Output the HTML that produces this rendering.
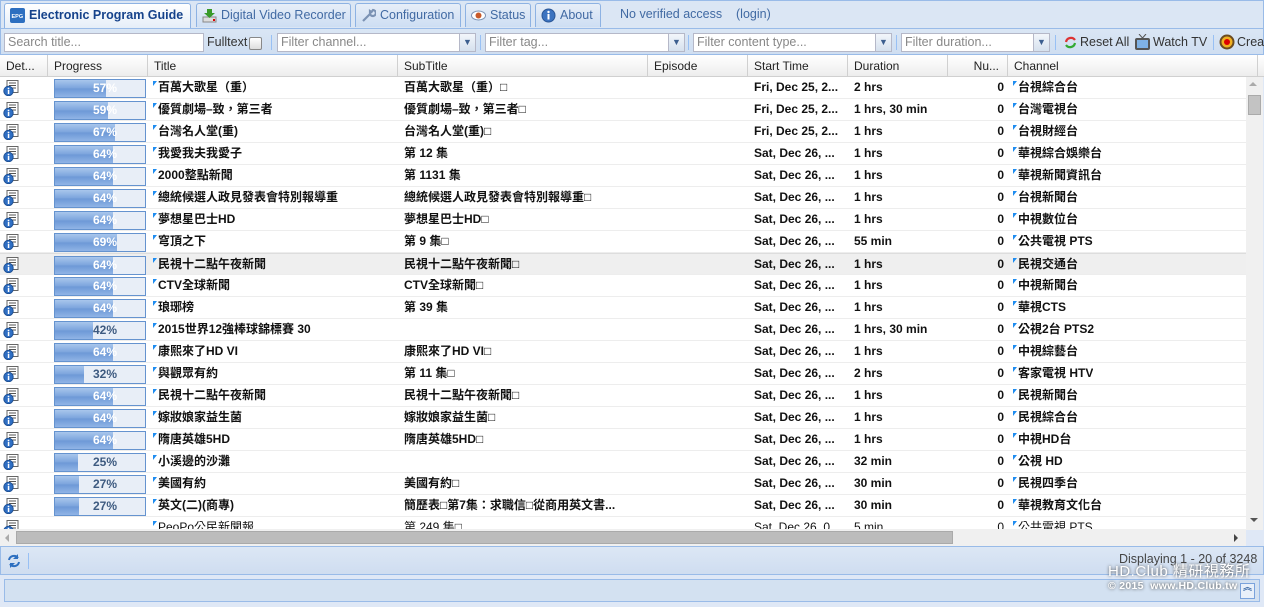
<!DOCTYPE html>
<html><head><meta charset="utf-8"><style>
*{box-sizing:border-box;margin:0;padding:0}
body{width:1264px;height:607px;overflow:hidden;background:#dfe8f6;font-family:"Liberation Sans","Noto Sans CJK TC",sans-serif;font-size:12px;position:relative}
.abs{position:absolute}
.tabbar{left:0;top:0;width:1264px;height:28px;background:#dbe6f4;border:1px solid #99bbe8;border-bottom:none}
.tab{position:absolute;top:2px;height:24px;border:1px solid #8db2e3;border-bottom:none;border-radius:3px 3px 0 0;background:linear-gradient(#e7eef8,#cddef3);color:#416aa3;font-size:12.5px;line-height:22px;padding-left:24px}
.tab.act{background:linear-gradient(#fff,#e4edf8);color:#15428b;font-weight:bold;height:26px}
.ico{position:absolute;left:5px;top:4px;width:15px;height:15px}
.tbar{left:0;top:28px;width:1264px;height:27px;background:linear-gradient(#dae6f4,#cfdef1);border:1px solid #99bbe8;border-top:1px solid #99bbe8}
.inp{position:absolute;top:4px;height:19px;background:#fff;border:1px solid #b5b8c8;color:#888;font-size:12.5px;line-height:17px;padding-left:3px}
.trg{position:absolute;right:-1px;top:-1px;width:17px;height:19px;background:linear-gradient(#f2f6fb,#d6e1ee);border:1px solid #b5b8c8;color:#3d5f8f;font-size:9px;text-align:center;line-height:17px}
.sep{position:absolute;top:6px;width:1px;height:15px;background:#98c0f4}
.tt{position:absolute;top:5px;font-size:12.5px;color:#333;line-height:16px}
.hdr{left:0;top:55px;width:1264px;height:22px;background:linear-gradient(#fff,#ededed);border-bottom:1px solid #d0d0d0}
.hc{position:absolute;top:0;height:22px;border-right:1px solid #d0d0d0;padding-left:6px;line-height:22px;color:#222}
.grid{left:0;top:77px;width:1246px;height:452px;background:#fff;overflow:hidden}
.row{position:absolute;left:0;width:1246px;height:22px;border-bottom:1px solid #ededed;font-weight:bold;color:#111;line-height:21px;white-space:nowrap}
.row.hl{background:#efefef;border-top:1px solid #ddd}
.c{position:absolute;top:0;overflow:hidden}
.pb{position:absolute;left:54px;top:2px;width:92px;height:19px;border:1px solid #6593cf;background:#e8eef7;overflow:hidden}
.pf{position:absolute;left:0;top:0;height:17px;background:linear-gradient(#a9c6ec,#7aa3dc 50%,#6c98d6 51%,#90b4e6)}
.pt{position:absolute;left:0;width:100px;text-align:center;top:0;line-height:17px;font-size:12px;font-weight:bold}
.mk{display:inline-block;width:0;height:0;border-top:5px solid #1e8cf0;border-right:4px solid transparent;vertical-align:top;margin-top:4px;margin-right:1px}
.di{position:absolute;left:3px;top:3px;width:16px;height:16px}
</style></head><body>
<div class="abs tabbar">
 <div class="tab act" style="left:3px;width:187px"><svg class="ico" viewBox="0 0 15 15"><rect width="15" height="15" rx="2" fill="#2d6fc0"/><text x="1.5" y="10" font-size="5.5" fill="#fff" font-family="Liberation Sans">EPG</text></svg>Electronic Program Guide</div>
 <div class="tab" style="left:195px;width:155px"><svg class="ico" viewBox="0 0 15 15"><rect x="1" y="9" width="13" height="5" fill="#ddd" stroke="#888"/><rect x="11" y="11" width="2" height="2" fill="#d00"/><path d="M5 1h5v4h3l-5.5 5L2 5h3z" fill="#3a9a2a"/></svg>Digital Video Recorder</div>
 <div class="tab" style="left:354px;width:106px"><svg class="ico" viewBox="0 0 15 15"><path d="M2 13l7-7M9 6a3 3 0 1 0 3-4l-1.5 2-1.5-1z" stroke="#7c93b4" stroke-width="2.2" fill="none"/></svg>Configuration</div>
 <div class="tab" style="left:464px;width:66px"><svg class="ico" viewBox="0 0 15 15"><ellipse cx="7.5" cy="7.5" rx="7" ry="4.5" fill="#fff" stroke="#7c93b4"/><circle cx="7.5" cy="7.5" r="3" fill="#c85a2a"/></svg>Status</div>
 <div class="tab" style="left:534px;width:66px"><svg class="ico" viewBox="0 0 15 15"><circle cx="7.5" cy="7.5" r="6.5" fill="#3c73c0" stroke="#2a5696"/><rect x="6.5" y="6" width="2" height="5.5" fill="#fff"/><circle cx="7.5" cy="4" r="1.2" fill="#fff"/></svg>About</div>
 <div class="tt" style="left:619px;top:5px;color:#416aa3">No verified access &nbsp;&nbsp;&nbsp;(login)</div>
</div>
<div class="abs tbar">
 <div class="inp" style="left:3px;width:200px">Search title...</div>
 <div class="tt" style="left:206px">Fulltext</div>
 <div class="abs" style="left:248px;top:8px;width:13px;height:13px;border:1px solid #888;border-radius:2px;background:linear-gradient(#fff,#ddd)"></div>
 <div class="sep" style="left:270px"></div>
 <div class="inp" style="left:276px;width:199px">Filter channel...<div class="trg">&#9660;</div></div>
 <div class="sep" style="left:479px"></div>
 <div class="inp" style="left:484px;width:200px">Filter tag...<div class="trg">&#9660;</div></div>
 <div class="sep" style="left:687px"></div>
 <div class="inp" style="left:692px;width:199px">Filter content type...<div class="trg">&#9660;</div></div>
 <div class="sep" style="left:895px"></div>
 <div class="inp" style="left:900px;width:149px">Filter duration...<div class="trg">&#9660;</div></div>
 <div class="sep" style="left:1054px"></div>
 <svg class="abs" style="left:1062px;top:6px" width="15" height="15" viewBox="0 0 15 15"><path d="M3 7a5 5 0 0 1 9-2" stroke="#d33" stroke-width="2.2" fill="none"/><path d="M12 8a5 5 0 0 1-9 2" stroke="#3a3" stroke-width="2.2" fill="none"/></svg>
 <div class="tt" style="left:1079px">Reset All</div>
 <svg class="abs" style="left:1133px;top:5px" width="17" height="17" viewBox="0 0 17 17"><rect x="1" y="4" width="15" height="12" rx="2" fill="#555"/><rect x="3" y="6" width="11" height="8" fill="#7fb2e6"/><path d="M5 0l3.5 4L12 0" stroke="#555" fill="none"/></svg>
 <div class="tt" style="left:1152px">Watch TV</div>
 <div class="sep" style="left:1212px"></div>
 <svg class="abs" style="left:1218px;top:5px" width="16" height="16" viewBox="0 0 16 16"><circle cx="8" cy="8" r="7.5" fill="#6b4b20"/><circle cx="8" cy="8" r="5.5" fill="#f0b020"/><circle cx="8" cy="8" r="3" fill="#d00"/></svg>
 <div class="tt" style="left:1236px">Crea</div>
</div>
<div class="abs hdr">
 <div class="hc" style="left:0;width:48px">Det...</div>
 <div class="hc" style="left:48px;width:100px">Progress</div>
 <div class="hc" style="left:148px;width:250px">Title</div>
 <div class="hc" style="left:398px;width:250px">SubTitle</div>
 <div class="hc" style="left:648px;width:100px">Episode</div>
 <div class="hc" style="left:748px;width:100px">Start Time</div>
 <div class="hc" style="left:848px;width:100px">Duration</div>
 <div class="hc" style="left:948px;width:60px;text-align:right;padding-right:8px">Nu...</div>
 <div class="hc" style="left:1008px;width:250px">Channel</div>
</div>
<div class="abs grid">
<svg width="0" height="0" style="position:absolute"><defs><symbol id="d" viewBox="0 0 16 16"><rect x="4" y="0.5" width="11" height="12" fill="#fff" stroke="#666"/><path d="M6 3h7M6 5.5h7M6 8h7" stroke="#555"/><circle cx="5.5" cy="11" r="4.7" fill="#2f6fc4" stroke="#1d4f93"/><rect x="4.8" y="10" width="1.5" height="4" fill="#fff"/><circle cx="5.5" cy="8.5" r="0.9" fill="#fff"/></symbol></defs></svg>
<div class="row" style="top:0"><svg class="di"><use href="#d"/></svg><div class="pb"><div class="pf" style="width:57%"></div><div class="pt" style="color:#fff">57%</div></div><div class="c" style="left:153px;width:245px"><i class="mk"></i>百萬大歌星（重）</div><div class="c" style="left:404px;width:244px">百萬大歌星（重）□</div><div class="c" style="left:754px">Fri, Dec 25, 2...</div><div class="c" style="left:854px">2 hrs</div><div class="c" style="left:948px;width:56px;text-align:right">0</div><div class="c" style="left:1013px"><i class="mk"></i>台視綜合台</div></div>
<div class="row" style="top:22px"><svg class="di"><use href="#d"/></svg><div class="pb"><div class="pf" style="width:59%"></div><div class="pt" style="color:#fff">59%</div></div><div class="c" style="left:153px;width:245px"><i class="mk"></i>優質劇場–致，第三者</div><div class="c" style="left:404px;width:244px">優質劇場–致，第三者□</div><div class="c" style="left:754px">Fri, Dec 25, 2...</div><div class="c" style="left:854px">1 hrs, 30 min</div><div class="c" style="left:948px;width:56px;text-align:right">0</div><div class="c" style="left:1013px"><i class="mk"></i>台灣電視台</div></div>
<div class="row" style="top:44px"><svg class="di"><use href="#d"/></svg><div class="pb"><div class="pf" style="width:67%"></div><div class="pt" style="color:#fff">67%</div></div><div class="c" style="left:153px;width:245px"><i class="mk"></i>台灣名人堂(重)</div><div class="c" style="left:404px;width:244px">台灣名人堂(重)□</div><div class="c" style="left:754px">Fri, Dec 25, 2...</div><div class="c" style="left:854px">1 hrs</div><div class="c" style="left:948px;width:56px;text-align:right">0</div><div class="c" style="left:1013px"><i class="mk"></i>台視財經台</div></div>
<div class="row" style="top:66px"><svg class="di"><use href="#d"/></svg><div class="pb"><div class="pf" style="width:64%"></div><div class="pt" style="color:#fff">64%</div></div><div class="c" style="left:153px;width:245px"><i class="mk"></i>我愛我夫我愛子</div><div class="c" style="left:404px;width:244px">第 12 集</div><div class="c" style="left:754px">Sat, Dec 26, ...</div><div class="c" style="left:854px">1 hrs</div><div class="c" style="left:948px;width:56px;text-align:right">0</div><div class="c" style="left:1013px"><i class="mk"></i>華視綜合娛樂台</div></div>
<div class="row" style="top:88px"><svg class="di"><use href="#d"/></svg><div class="pb"><div class="pf" style="width:64%"></div><div class="pt" style="color:#fff">64%</div></div><div class="c" style="left:153px;width:245px"><i class="mk"></i>2000整點新聞</div><div class="c" style="left:404px;width:244px">第 1131 集</div><div class="c" style="left:754px">Sat, Dec 26, ...</div><div class="c" style="left:854px">1 hrs</div><div class="c" style="left:948px;width:56px;text-align:right">0</div><div class="c" style="left:1013px"><i class="mk"></i>華視新聞資訊台</div></div>
<div class="row" style="top:110px"><svg class="di"><use href="#d"/></svg><div class="pb"><div class="pf" style="width:64%"></div><div class="pt" style="color:#fff">64%</div></div><div class="c" style="left:153px;width:245px"><i class="mk"></i>總統候選人政見發表會特別報導重</div><div class="c" style="left:404px;width:244px">總統候選人政見發表會特別報導重□</div><div class="c" style="left:754px">Sat, Dec 26, ...</div><div class="c" style="left:854px">1 hrs</div><div class="c" style="left:948px;width:56px;text-align:right">0</div><div class="c" style="left:1013px"><i class="mk"></i>台視新聞台</div></div>
<div class="row" style="top:132px"><svg class="di"><use href="#d"/></svg><div class="pb"><div class="pf" style="width:64%"></div><div class="pt" style="color:#fff">64%</div></div><div class="c" style="left:153px;width:245px"><i class="mk"></i>夢想星巴士HD</div><div class="c" style="left:404px;width:244px">夢想星巴士HD□</div><div class="c" style="left:754px">Sat, Dec 26, ...</div><div class="c" style="left:854px">1 hrs</div><div class="c" style="left:948px;width:56px;text-align:right">0</div><div class="c" style="left:1013px"><i class="mk"></i>中視數位台</div></div>
<div class="row" style="top:154px"><svg class="di"><use href="#d"/></svg><div class="pb"><div class="pf" style="width:69%"></div><div class="pt" style="color:#fff">69%</div></div><div class="c" style="left:153px;width:245px"><i class="mk"></i>穹頂之下</div><div class="c" style="left:404px;width:244px">第 9 集□</div><div class="c" style="left:754px">Sat, Dec 26, ...</div><div class="c" style="left:854px">55 min</div><div class="c" style="left:948px;width:56px;text-align:right">0</div><div class="c" style="left:1013px"><i class="mk"></i>公共電視 PTS</div></div>
<div class="row hl" style="top:176px"><svg class="di"><use href="#d"/></svg><div class="pb"><div class="pf" style="width:64%"></div><div class="pt" style="color:#fff">64%</div></div><div class="c" style="left:153px;width:245px"><i class="mk"></i>民視十二點午夜新聞</div><div class="c" style="left:404px;width:244px">民視十二點午夜新聞□</div><div class="c" style="left:754px">Sat, Dec 26, ...</div><div class="c" style="left:854px">1 hrs</div><div class="c" style="left:948px;width:56px;text-align:right">0</div><div class="c" style="left:1013px"><i class="mk"></i>民視交通台</div></div>
<div class="row" style="top:198px"><svg class="di"><use href="#d"/></svg><div class="pb"><div class="pf" style="width:64%"></div><div class="pt" style="color:#fff">64%</div></div><div class="c" style="left:153px;width:245px"><i class="mk"></i>CTV全球新聞</div><div class="c" style="left:404px;width:244px">CTV全球新聞□</div><div class="c" style="left:754px">Sat, Dec 26, ...</div><div class="c" style="left:854px">1 hrs</div><div class="c" style="left:948px;width:56px;text-align:right">0</div><div class="c" style="left:1013px"><i class="mk"></i>中視新聞台</div></div>
<div class="row" style="top:220px"><svg class="di"><use href="#d"/></svg><div class="pb"><div class="pf" style="width:64%"></div><div class="pt" style="color:#fff">64%</div></div><div class="c" style="left:153px;width:245px"><i class="mk"></i>琅琊榜</div><div class="c" style="left:404px;width:244px">第 39 集</div><div class="c" style="left:754px">Sat, Dec 26, ...</div><div class="c" style="left:854px">1 hrs</div><div class="c" style="left:948px;width:56px;text-align:right">0</div><div class="c" style="left:1013px"><i class="mk"></i>華視CTS</div></div>
<div class="row" style="top:242px"><svg class="di"><use href="#d"/></svg><div class="pb"><div class="pf" style="width:42%"></div><div class="pt" style="color:#3d5a80">42%</div></div><div class="c" style="left:153px;width:245px"><i class="mk"></i>2015世界12強棒球錦標賽 30</div><div class="c" style="left:754px">Sat, Dec 26, ...</div><div class="c" style="left:854px">1 hrs, 30 min</div><div class="c" style="left:948px;width:56px;text-align:right">0</div><div class="c" style="left:1013px"><i class="mk"></i>公視2台 PTS2</div></div>
<div class="row" style="top:264px"><svg class="di"><use href="#d"/></svg><div class="pb"><div class="pf" style="width:64%"></div><div class="pt" style="color:#fff">64%</div></div><div class="c" style="left:153px;width:245px"><i class="mk"></i>康熙來了HD VI</div><div class="c" style="left:404px;width:244px">康熙來了HD VI□</div><div class="c" style="left:754px">Sat, Dec 26, ...</div><div class="c" style="left:854px">1 hrs</div><div class="c" style="left:948px;width:56px;text-align:right">0</div><div class="c" style="left:1013px"><i class="mk"></i>中視綜藝台</div></div>
<div class="row" style="top:286px"><svg class="di"><use href="#d"/></svg><div class="pb"><div class="pf" style="width:32%"></div><div class="pt" style="color:#3d5a80">32%</div></div><div class="c" style="left:153px;width:245px"><i class="mk"></i>與觀眾有約</div><div class="c" style="left:404px;width:244px">第 11 集□</div><div class="c" style="left:754px">Sat, Dec 26, ...</div><div class="c" style="left:854px">2 hrs</div><div class="c" style="left:948px;width:56px;text-align:right">0</div><div class="c" style="left:1013px"><i class="mk"></i>客家電視 HTV</div></div>
<div class="row" style="top:308px"><svg class="di"><use href="#d"/></svg><div class="pb"><div class="pf" style="width:64%"></div><div class="pt" style="color:#fff">64%</div></div><div class="c" style="left:153px;width:245px"><i class="mk"></i>民視十二點午夜新聞</div><div class="c" style="left:404px;width:244px">民視十二點午夜新聞□</div><div class="c" style="left:754px">Sat, Dec 26, ...</div><div class="c" style="left:854px">1 hrs</div><div class="c" style="left:948px;width:56px;text-align:right">0</div><div class="c" style="left:1013px"><i class="mk"></i>民視新聞台</div></div>
<div class="row" style="top:330px"><svg class="di"><use href="#d"/></svg><div class="pb"><div class="pf" style="width:64%"></div><div class="pt" style="color:#fff">64%</div></div><div class="c" style="left:153px;width:245px"><i class="mk"></i>嫁妝娘家益生菌</div><div class="c" style="left:404px;width:244px">嫁妝娘家益生菌□</div><div class="c" style="left:754px">Sat, Dec 26, ...</div><div class="c" style="left:854px">1 hrs</div><div class="c" style="left:948px;width:56px;text-align:right">0</div><div class="c" style="left:1013px"><i class="mk"></i>民視綜合台</div></div>
<div class="row" style="top:352px"><svg class="di"><use href="#d"/></svg><div class="pb"><div class="pf" style="width:64%"></div><div class="pt" style="color:#fff">64%</div></div><div class="c" style="left:153px;width:245px"><i class="mk"></i>隋唐英雄5HD</div><div class="c" style="left:404px;width:244px">隋唐英雄5HD□</div><div class="c" style="left:754px">Sat, Dec 26, ...</div><div class="c" style="left:854px">1 hrs</div><div class="c" style="left:948px;width:56px;text-align:right">0</div><div class="c" style="left:1013px"><i class="mk"></i>中視HD台</div></div>
<div class="row" style="top:374px"><svg class="di"><use href="#d"/></svg><div class="pb"><div class="pf" style="width:25%"></div><div class="pt" style="color:#3d5a80">25%</div></div><div class="c" style="left:153px;width:245px"><i class="mk"></i>小溪邊的沙灘</div><div class="c" style="left:754px">Sat, Dec 26, ...</div><div class="c" style="left:854px">32 min</div><div class="c" style="left:948px;width:56px;text-align:right">0</div><div class="c" style="left:1013px"><i class="mk"></i>公視 HD</div></div>
<div class="row" style="top:396px"><svg class="di"><use href="#d"/></svg><div class="pb"><div class="pf" style="width:27%"></div><div class="pt" style="color:#3d5a80">27%</div></div><div class="c" style="left:153px;width:245px"><i class="mk"></i>美國有約</div><div class="c" style="left:404px;width:244px">美國有約□</div><div class="c" style="left:754px">Sat, Dec 26, ...</div><div class="c" style="left:854px">30 min</div><div class="c" style="left:948px;width:56px;text-align:right">0</div><div class="c" style="left:1013px"><i class="mk"></i>民視四季台</div></div>
<div class="row" style="top:418px"><svg class="di"><use href="#d"/></svg><div class="pb"><div class="pf" style="width:27%"></div><div class="pt" style="color:#3d5a80">27%</div></div><div class="c" style="left:153px;width:245px"><i class="mk"></i>英文(二)(商專)</div><div class="c" style="left:404px;width:244px">簡歷表□第7集：求職信□從商用英文書...</div><div class="c" style="left:754px">Sat, Dec 26, ...</div><div class="c" style="left:854px">30 min</div><div class="c" style="left:948px;width:56px;text-align:right">0</div><div class="c" style="left:1013px"><i class="mk"></i>華視教育文化台</div></div>
<div class="row" style="top:440px;font-weight:normal"><svg class="di"><use href="#d"/></svg><div class="c" style="left:153px;width:245px"><i class="mk"></i>PeoPo公民新聞報</div><div class="c" style="left:404px;width:244px">第 249 集□</div><div class="c" style="left:754px">Sat, Dec 26, 0...</div><div class="c" style="left:854px">5 min</div><div class="c" style="left:948px;width:56px;text-align:right">0</div><div class="c" style="left:1013px"><i class="mk"></i>公共電視 PTS</div></div>
</div>
<div class="abs" style="left:1246px;top:77px;width:17px;height:453px;background:#f0f0f0"></div>
<div class="abs" style="left:1249px;top:82px;width:0;height:0;border-left:4px solid transparent;border-right:4px solid transparent;border-bottom:4px solid #aaa"></div>
<div class="abs" style="left:1248px;top:95px;width:13px;height:20px;background:#c3c3c3;border:1px solid #aaa"></div>
<div class="abs" style="left:1250px;top:518px;width:0;height:0;border-left:4px solid transparent;border-right:4px solid transparent;border-top:4px solid #555"></div>
<div class="abs" style="left:0;top:529px;width:1246px;height:17px;background:#f0f0f0"></div>
<div class="abs" style="left:5px;top:534px;width:0;height:0;border-top:4px solid transparent;border-bottom:4px solid transparent;border-right:4px solid #aaa"></div>
<div class="abs" style="left:16px;top:531px;width:937px;height:13px;background:#bcbcbc;border:1px solid #aaa"></div>
<div class="abs" style="left:1234px;top:534px;width:0;height:0;border-top:4px solid transparent;border-bottom:4px solid transparent;border-left:4px solid #444"></div>
<div class="abs" style="left:0;top:546px;width:1264px;height:29px;background:linear-gradient(#dce7f5,#cfddf0);border:1px solid #99bbe8"></div>
<svg class="abs" style="left:6px;top:553px" width="16" height="16" viewBox="0 0 16 16"><path d="M3 7a5 5 0 0 1 9-2M13 9a5 5 0 0 1-9 2" stroke="#2d6fc0" stroke-width="2" fill="none"/><path d="M12 1v5h-5zM4 15v-5h5z" fill="#2d6fc0"/></svg>
<div class="abs" style="left:28px;top:553px;width:1px;height:16px;background:#98c0f4"></div>
<div class="abs" style="left:4px;top:579px;width:1256px;height:23px;background:#d3e1f1;border:1px solid #99bbe8"></div>
<div class="abs" style="left:1240px;top:583px;width:15px;height:16px;background:#e8f0fa;border:1px solid #7aa3dc;color:#2d5fa0;font-size:9px;text-align:center;line-height:7px;font-weight:bold">︽</div>
<div class="abs" style="left:1119px;top:552px;color:#444;font-size:12.5px">Displaying 1 - 20 of 3248</div>
<div class="abs" style="left:1108px;top:564px;color:#fff;font-size:15px;line-height:16px;letter-spacing:0.5px;text-shadow:0 0 3px #444;z-index:5">HD.Club 精研視務所</div>
<div class="abs" style="left:1108px;top:580px;color:#fff;font-size:10.5px;line-height:12px;font-weight:bold;letter-spacing:0.3px;text-shadow:0 0 3px #444;z-index:5">© 2015&nbsp; www.HD.Club.tw</div>
</body></html>
